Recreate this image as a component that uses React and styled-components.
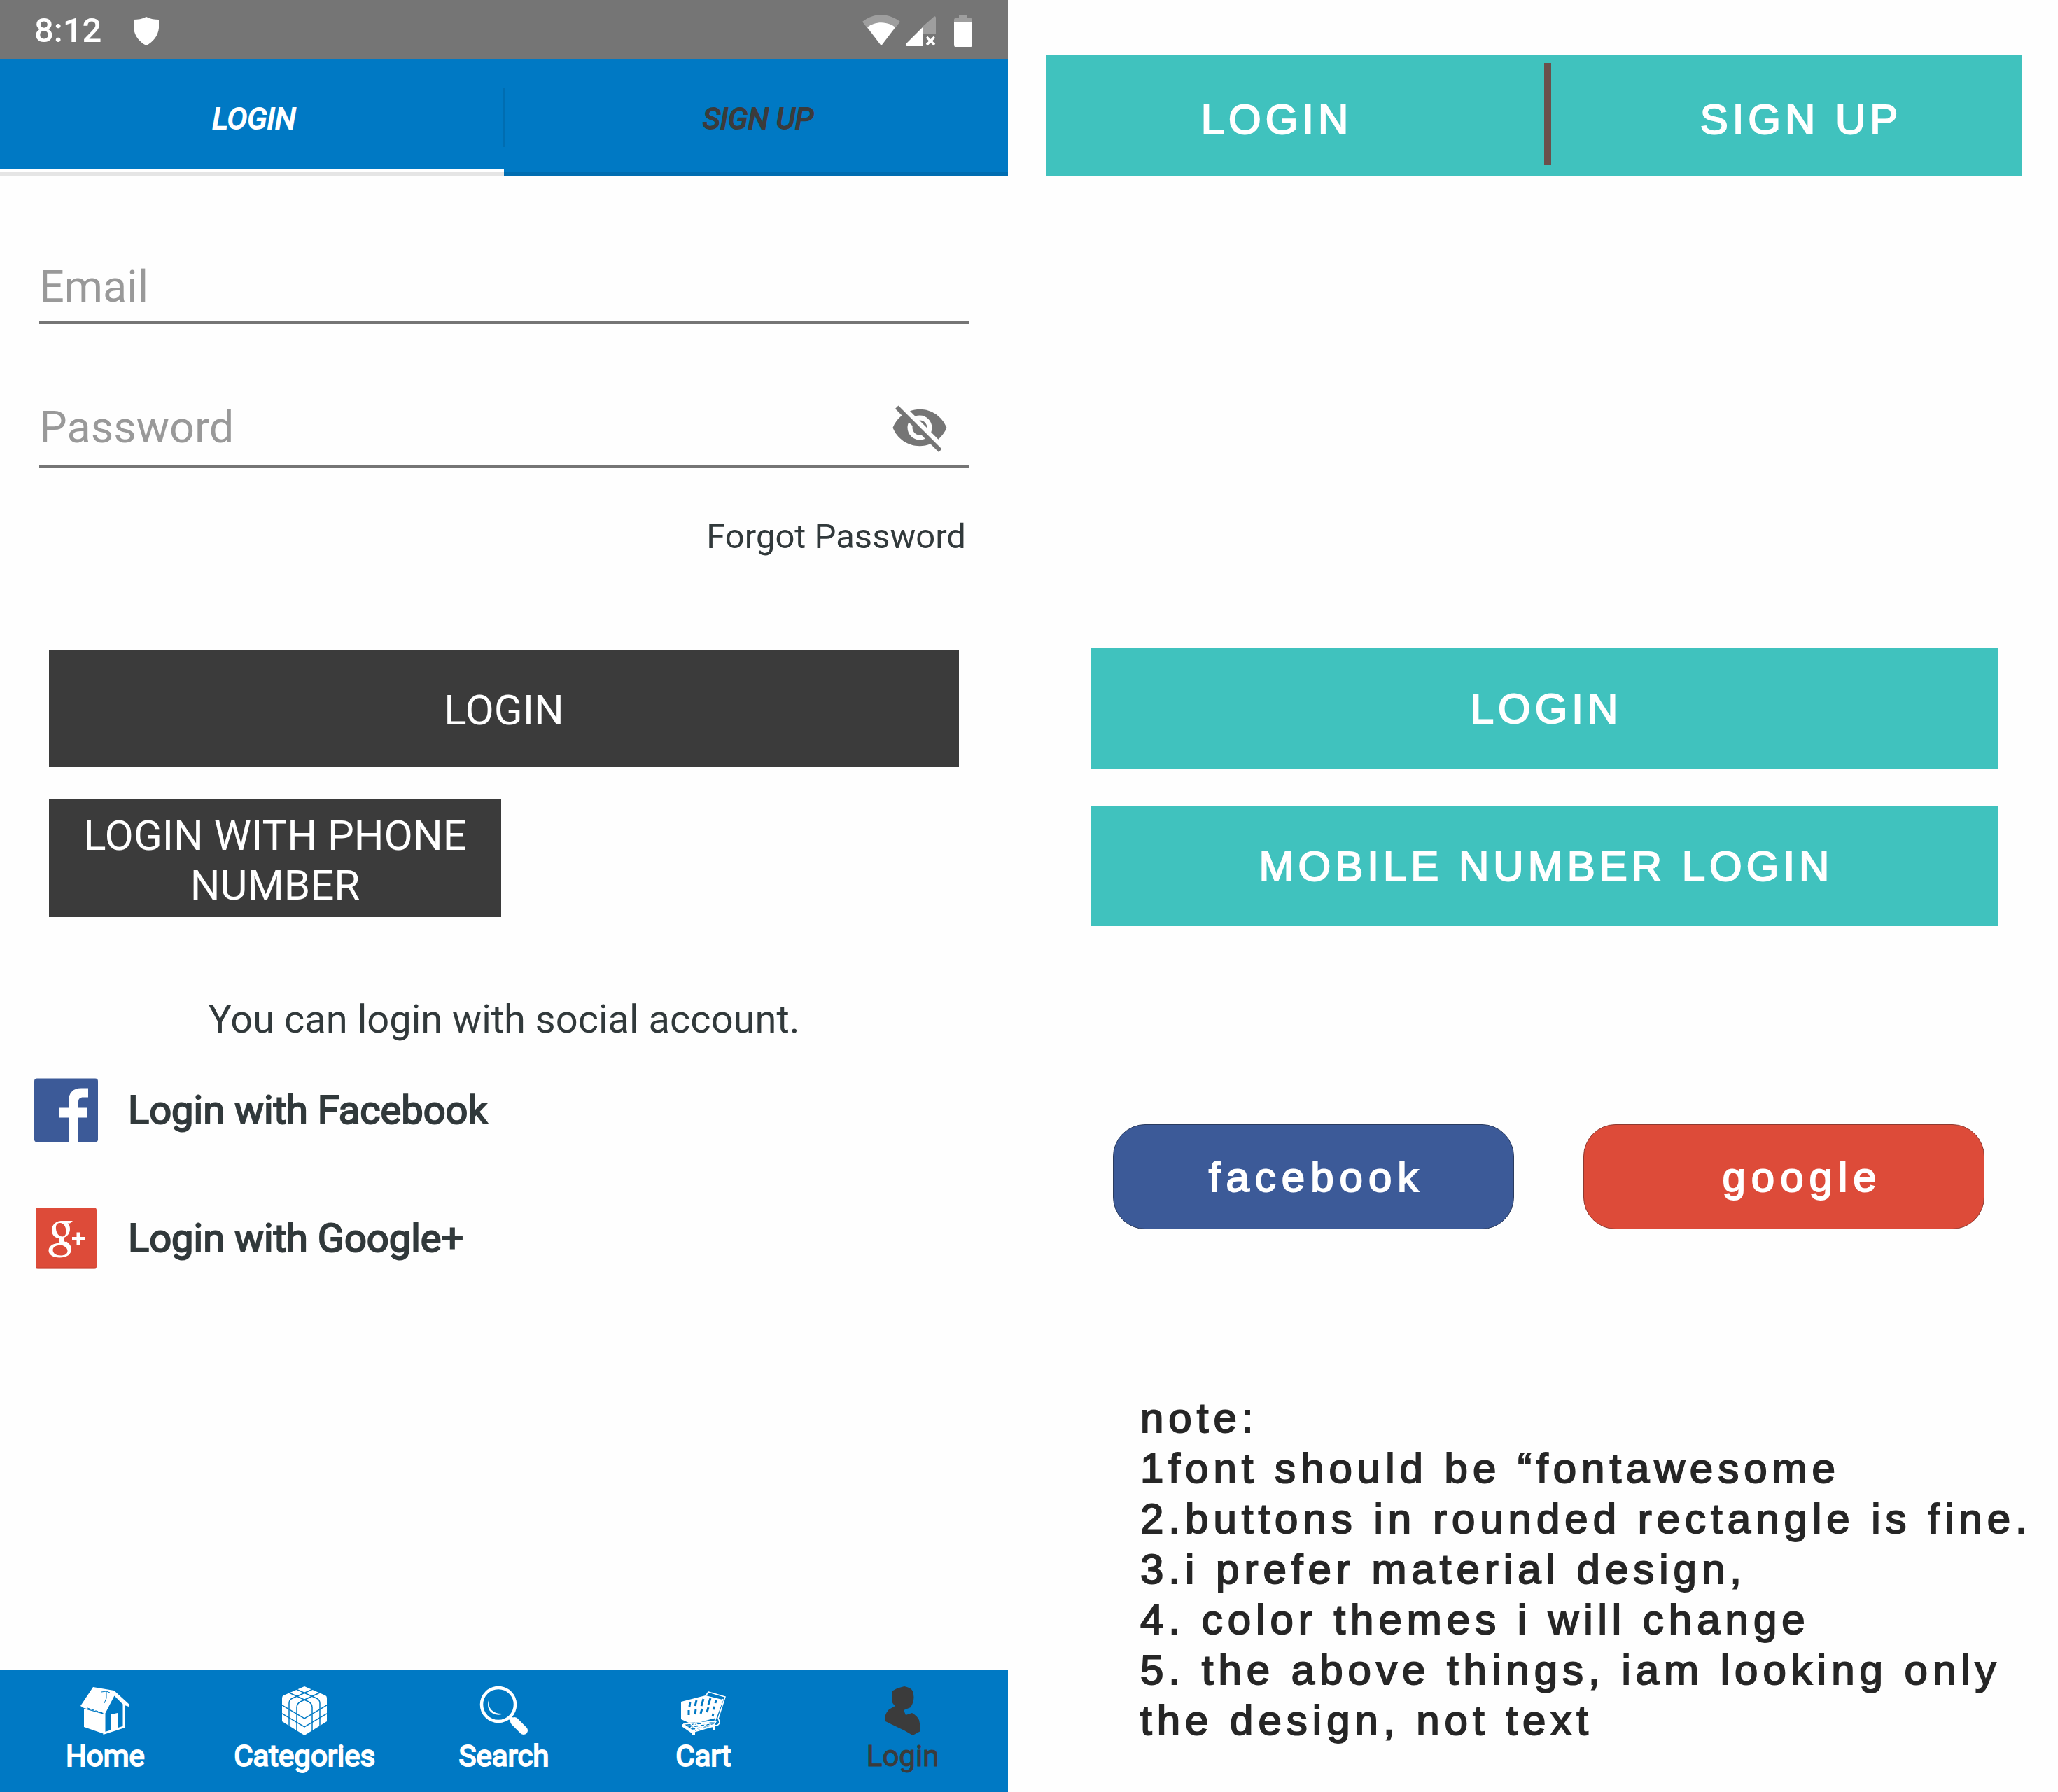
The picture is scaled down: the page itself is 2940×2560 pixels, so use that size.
import React, { useState } from "react";
import styled, { createGlobalStyle, css } from "styled-components";
import { MdVisibility, MdVisibilityOff } from "react-icons/md";

const color = {
  page: "#fefefe",
  status: "#757575",
  blue: "#0079c4",
  blueShade: "#006db1",
  dark: "#3b3b3b",
  ink: "#31393b",
  hint: "#999999",
  line: "#757575",
  teal: "#40c2be",
  brown: "#6b504c",
  facebook: "#3c5a98",
  google: "#dd4b39",
  note: "#262626",
};

const roboto = `Roboto, "Noto Sans", sans-serif`;
const helvetica = `"Liberation Sans", Arial, sans-serif`;

const GlobalStyle = createGlobalStyle`
  *, *::before, *::after { box-sizing: border-box; }
  body { margin: 0; background: ${color.page}; }
  button { border: 0; margin: 0; padding: 0; background: none; cursor: pointer; }
  svg { display: block; flex: none; }
`;

const heavier = (px) => css`
  -webkit-text-stroke: ${px}px currentColor;
`;

const Page = styled.main`
  display: grid;
  grid-template-columns: 24fr 25fr;
  min-height: 100vh;
`;

/* ---------- left: current screen ---------- */

const Phone = styled.section`
  display: flex;
  flex-direction: column;
  font-family: ${roboto};
`;

const StatusBar = styled.header`
  display: flex;
  align-items: center;
  height: 84px;
  padding: 4px 51px 0 49px;
  background: ${color.status};
  color: #fff;
`;

const Clock = styled.span`
  font-size: 49px;
  font-weight: 500;
  line-height: 56px;
  margin-right: 46px;
`;

const StatusIcons = styled.div`
  display: flex;
  align-items: center;
  margin-left: auto;
`;

const StatusGap = styled.span`
  width: ${(p) => p.$size}px;
`;

const Tabs = styled.nav`
  display: flex;
  height: 168px;
  background: ${color.blue};
`;

const Tab = styled.button`
  flex: 1;
  display: flex;
  align-items: center;
  justify-content: center;
  padding: 12px 0 0 6px;
  color: ${(p) => (p.$active ? "#fff" : color.dark)};
  font: italic 400 43px/50px ${roboto};
  border-bottom: 10px solid transparent;
  background: linear-gradient(
      ${(p) => (p.$active ? "#fff" : color.blue)} 3px,
      ${(p) => (p.$active ? "#e5e5e5" : color.blueShade)} 3px
    )
    0 100% / 100% 10px no-repeat border-box;
  ${heavier(2)}
`;

const TabDivider = styled.span`
  width: 2px;
  margin: 42px -1px;
  background: ${color.blueShade};
`;

const Form = styled.form`
  display: flex;
  flex-direction: column;
  padding: 108px 56px 0;
`;

const Field = styled.div`
  display: flex;
  align-items: center;
  height: ${(p) => (p.$tall ? 111 : 103)}px;
  padding-right: 28px;
  margin-bottom: ${(p) => (p.$tall ? 70 : 94)}px;
  border-bottom: 4px solid ${color.line};
`;

const Input = styled.input`
  flex: 1;
  min-width: 0;
  padding: 0;
  border: 0;
  outline: 0;
  background: transparent;
  color: ${color.ink};
  font: 400 63px/76px ${roboto};

  &::placeholder {
    color: ${color.hint};
    opacity: 1;
  }
`;

const EyeButton = styled.button`
  color: ${color.line};
  font-size: 84px;
`;

const ForgotLink = styled.a`
  align-self: flex-end;
  margin-right: 4px;
  color: ${color.ink};
  font-size: 49px;
  line-height: 58px;
  text-decoration: none;
`;

const Actions = styled.div`
  display: flex;
  flex-direction: column;
  gap: 46px;
  padding: 132px 14px 0;
`;

const DarkButton = styled.button`
  width: ${(p) => (p.$half ? "calc(50% - 4px)" : "100%")};
  min-height: 168px;
  padding: 5px 24px 0;
  background: ${color.dark};
  color: #fff;
  font: 400 60px/71px ${roboto};
`;

const SocialHint = styled.p`
  margin: 113px 0 51px;
  text-align: center;
  color: ${color.ink};
  font-size: 56px;
  line-height: 66px;
`;

const SocialLinks = styled.div`
  display: flex;
  flex-direction: column;
  align-items: flex-start;
  gap: 91px;
  padding-left: 49px;
`;

const SocialLink = styled.button`
  display: flex;
  align-items: center;
  gap: 43px;
  color: ${color.ink};
  font: 400 56px/66px ${roboto};
  ${heavier(2)}

  svg {
    width: 91px;
    height: 92px;
  }
`;

const BottomNav = styled.nav`
  display: grid;
  grid-template-columns: repeat(5, 1fr);
  margin-top: auto;
  height: 175px;
  padding: 24px 8px 0;
  background: ${color.blue};
`;

const NavItem = styled.a`
  display: flex;
  flex-direction: column;
  align-items: center;
  gap: 5px;
  color: ${(p) => (p.$active ? color.dark : "#fff")};
  font-size: 42px;
  line-height: 50px;
  text-decoration: none;
  ${(p) => heavier(p.$active ? 1 : 2)}
`;

/* ---------- right: proposed design ---------- */

const Proposal = styled.section`
  display: flex;
  flex-direction: column;
  padding-top: 78px;
  color: #fff;
  font-family: ${helvetica};
`;

const spaced = (tracking) => css`
  font-family: ${helvetica};
  font-size: 60px;
  line-height: 72px;
  letter-spacing: ${tracking}px;
  -webkit-text-stroke: 2px currentColor;
`;

const TealTabs = styled.nav`
  display: grid;
  grid-template-columns: 712fr 10px 672fr;
  height: 174px;
  margin: 0 52px 0 54px;
  background: ${color.teal};
`;

const TealTab = styled.button`
  padding: ${(p) => (p.$last ? "12px 0 0 42px" : "12px 52px 0 0")};
  color: inherit;
  ${spaced(6)}
`;

const TealDivider = styled.span`
  margin: 12px 0 16px;
  background: ${color.brown};
`;

const TealActions = styled.div`
  display: flex;
  flex-direction: column;
  gap: 53px;
  margin: 674px 86px 0 118px;
`;

const TealButton = styled.button`
  height: 172px;
  padding: 1px 0 0 6px;
  background: ${color.teal};
  color: inherit;
  ${spaced(6)}
`;

const PillRow = styled.div`
  display: grid;
  grid-template-columns: repeat(2, 1fr);
  gap: 99px;
  margin: 283px 105px 0 150px;
`;

const Pill = styled.button`
  height: 150px;
  padding: 2px 0 0 ${(p) => (p.$inset ? 52 : 8)}px;
  border: 1px solid ${(p) => (p.$inset ? "#8d3a31" : "#2a3b5e")};
  border-radius: 46px;
  background: ${(p) => (p.$inset ? color.google : color.facebook)};
  color: inherit;
  ${spaced(8)}
`;

const Notes = styled.div`
  margin: 234px 0 0 189px;
  color: ${color.note};
  white-space: nowrap;
  ${spaced(7)}
`;

const NoteLine = styled.p`
  margin: 0;
`;

/* ---------- drawings ---------- */

const ShieldIcon = () => (
  <svg width="36" height="41" viewBox="0 0 36 41" fill="#fff">
    <path d="M18 0C12 3.500 6 4 0 4V16C1 27 8 36 18 41C28 36 35 27 36 16V4C30 4 24 3.500 18 0Z" />
  </svg>
);

const WifiIcon = () => (
  <svg width="56" height="46" viewBox="0 0 56 46">
    <path d="M1 10C17-3 39-3 55 10L29 43Q28 45 27 43Z" fill="#fff" opacity=".3" />
    <path d="M8 18C19 9 37 9 48 18L29 43Q28 45 27 43Z" fill="#fff" />
  </svg>
);

const SignalIcon = () => (
  <svg width="45" height="46" viewBox="0 0 45 46">
    <path d="M25 17L41 3Q44 1 44 5V27H25Z" fill="#fff" opacity=".3" />
    <path d="M25 18V45H3Q-1 45 2 41Z" fill="#fff" />
    <path d="M31 32L42 43M42 32L31 43" stroke="#fff" strokeWidth="3.500" />
  </svg>
);

const BatteryIcon = () => (
  <svg width="26" height="46" viewBox="0 0 26 46">
    <path d="M7 0H19V5H24Q26 5 26 7V12H0V7Q0 5 2 5H7Z" fill="#fff" opacity=".3" />
    <path d="M0 11H26V43Q26 46 24 46H2Q0 46 0 43Z" fill="#fff" />
  </svg>
);

const FacebookLogo = () => (
  <svg viewBox="0 0 91 91">
    <rect width="91" height="91" rx="4" fill={color.facebook} />
    <path
      d="M49 91V56H36V42H49V33C49 20 56 14 67 14H77V27H70C65 27 63 29 63 34V42H76L75 56H63V91Z"
      fill="#fff"
    />
  </svg>
);

const GoogleLogo = () => (
  <svg viewBox="0 0 91 91">
    <rect x="2" y="2" width="87" height="87" rx="3" fill={color.google} />
    <path d="M3 88H88" stroke="#b03a2e" strokeWidth="1.500" />
    {/* Two-storey g: ring shapes cut with even-odd, plus the connecting strokes */}
    <g fill="#fff" fillRule="evenodd" transform="translate(2 1)">
      <path d="M36 19.500C28 20 23 26 23 33C23 40 28 44.500 35 44.500C43 44.500 49 39 49 31C49 24 45 20 36 19.500ZM34 22.500C39 21.500 43 27 43.500 33C44 38 42 42 38 42C33 42 29.500 37 29 31C28.700 26 30 23 34 22.500Z" />
      <path d="M36 51C26 51 18.500 55 18.500 62C18.500 68 25 72 34 72C45 72 51 67 51 60C51 55 48 52 44 49L38 51ZM37 54C42 56 45.500 58.500 45.500 62.500C45.500 67 41 69 36 69C29 69 24.500 66 24.500 61C24.500 56.500 30 54 37 54Z" />
      <path d="M35 19.500H53L49 23H42Z" />
      <path d="M36 42C32 46 32 49 37 53L47 54C43 50 38 48 41 43Z" />
    </g>
    <path d="M54 46H72M63 37V55" stroke="#fff" strokeWidth="5" />
  </svg>
);

const HomeIcon = () => (
  <svg width="70" height="70" viewBox="0 0 70 70">
    <path d="M18 1L48 6L70 26L69 29L63 27L48 13L33 38L5 31L0 28Z" fill="#fff" />
    <path d="M5 32L34 40V68L5 58Z" fill="#fff" />
    <path d="M34 38L48 11L62 25V58L34 67Z" fill={color.blue} stroke="#fff" strokeWidth="3" />
    <path d="M44 40L53 38V60L44 64Z" fill="#fff" />
    <path d="M30 8L37 7V17L34 24M37 7L42 9" fill="none" stroke={color.blue} strokeWidth="1" />
    <path d="M10 31L32 38" stroke={color.blue} strokeDasharray="4 2" strokeWidth="1" />
  </svg>
);

const CategoriesIcon = () => (
  <svg width="64" height="70" viewBox="0 0 64 70">
    <path d="M32 0L62 13Q64 14 64 17V50L32 70L0 50V17Q0 14 2 13Z" fill="#fff" />
    <g fill="none" stroke={color.blue} strokeWidth="1.500">
      <path d="M20 4L49 17Q54 19 54 24V60M10 9L38 22Q43 25 43 30V66" />
      <path d="M44 4L15 17Q10 19 10 24V60M54 9L26 22Q21 25 21 30V66" />
      <path d="M0 27L32 46L64 27M0 39L32 58L64 39" />
    </g>
  </svg>
);

const SearchIcon = () => (
  <svg width="70" height="70" viewBox="0 0 70 70">
    <circle cx="27" cy="26" r="24" fill="none" stroke="#fff" strokeWidth="4.500" />
    <path d="M13 20C12 32 20 40 34 39C25 44 8 38 13 20Z" fill="#fff" />
    <path d="M42 43L50 51" stroke="#fff" strokeWidth="6" />
    <path d="M50 50L63 63" stroke="#fff" strokeLinecap="round" strokeWidth="12" />
  </svg>
);

const CartIcon = () => (
  <svg width="64" height="70" viewBox="0 -8 64 70">
    <path d="M0 14L35 5L59 11L50 37L28 43L11 44L0 39Z" fill="#fff" />
    <g stroke={color.blue} fill="none" strokeWidth="3">
      <path d="M13 14L12 21M22 12L20 20M32 10L29 20M42 9L39 18M50 12L49 16" />
      <path d="M11 26V33M21 25L20 32M30 24L28 31M39 22L37 29M48 21L46 25M46 31L45 35" />
    </g>
    <g stroke="#fff" fill="none" strokeWidth="1.600">
      <path d="M35 6L39 0L63 7L53 38Q58 46 50 48L45 46" />
      <path d="M60 10L48 42M3 46L50 42L46 49L18 57L3 46" />
      <path d="M6 49L49 44M11 52L47 47M14 55L46 49M12 44L24 55M20 44L31 53M29 43L38 51M37 42L44 49M22 43L12 53M32 43L18 56M42 41L27 54" />
    </g>
    <path d="M3 48L16 57" stroke="#fff" strokeLinecap="round" strokeWidth="4" />
    <path d="M18 54V61M47 47V55" stroke="#fff" strokeWidth="4" />
  </svg>
);

const PersonIcon = () => (
  <svg width="50" height="70" viewBox="0 0 50 70">
    <path
      d="M27 0Q37 2 39 7Q43 19 36 30L26 34L29 41L38 38Q45 42 48 48Q50 55 50 64L39 70L27 63L0 50V41Q2 36 5 33L14 28Q9 24 9 19V8Q13 3 27 0Z"
      fill={color.dark}
    />
  </svg>
);

const navItems = [
  { label: "Home", Icon: HomeIcon },
  { label: "Categories", Icon: CategoriesIcon },
  { label: "Search", Icon: SearchIcon },
  { label: "Cart", Icon: CartIcon },
  { label: "Login", Icon: PersonIcon, active: true },
];

const notes = [
  "note:",
  "1font should be “fontawesome",
  "2.buttons in rounded rectangle is fine.",
  "3.i prefer material design,",
  "4. color themes i will change",
  "5. the above things, iam looking only",
  "the design, not text",
];

function LoginScreen() {
  const [visible, setVisible] = useState(false);

  return (
    <Phone>
      <StatusBar>
        <Clock>8:12</Clock>
        <ShieldIcon />
        <StatusIcons>
          <WifiIcon />
          <StatusGap $size={6} />
          <SignalIcon />
          <StatusGap $size={25} />
          <BatteryIcon />
        </StatusIcons>
      </StatusBar>

      <Tabs>
        <Tab type="button" $active>LOGIN</Tab>
        <TabDivider />
        <Tab type="button">SIGN UP</Tab>
      </Tabs>

      <Form onSubmit={(e) => e.preventDefault()}>
        <Field>
          <Input type="email" aria-label="Email" placeholder="Email" />
        </Field>
        <Field $tall>
          <Input type={visible ? "text" : "password"} aria-label="Password" placeholder="Password" />
          <EyeButton type="button" aria-label="Show password" onClick={() => setVisible(!visible)}>
            {visible ? <MdVisibility /> : <MdVisibilityOff />}
          </EyeButton>
        </Field>
        <ForgotLink href="#forgot">Forgot Password</ForgotLink>
        <Actions>
          <DarkButton type="submit">LOGIN</DarkButton>
          <DarkButton type="button" $half>LOGIN WITH PHONE NUMBER</DarkButton>
        </Actions>
      </Form>

      <SocialHint>You can login with social account.</SocialHint>
      <SocialLinks>
        <SocialLink type="button">
          <FacebookLogo />
          Login with Facebook
        </SocialLink>
        <SocialLink type="button">
          <GoogleLogo />
          Login with Google+
        </SocialLink>
      </SocialLinks>

      <BottomNav>
        {navItems.map(({ label, Icon, active }) => (
          <NavItem key={label} href={`#${label.toLowerCase()}`} $active={active}>
            <Icon />
            {label}
          </NavItem>
        ))}
      </BottomNav>
    </Phone>
  );
}

function ProposedDesign() {
  return (
    <Proposal>
      <TealTabs>
        <TealTab type="button">LOGIN</TealTab>
        <TealDivider />
        <TealTab type="button" $last>SIGN UP</TealTab>
      </TealTabs>

      <TealActions>
        <TealButton type="button">LOGIN</TealButton>
        <TealButton type="button">MOBILE NUMBER LOGIN</TealButton>
      </TealActions>

      <PillRow>
        <Pill type="button">facebook</Pill>
        <Pill type="button" $inset>google</Pill>
      </PillRow>

      <Notes>
        {notes.map((line) => (
          <NoteLine key={line}>{line}</NoteLine>
        ))}
      </Notes>
    </Proposal>
  );
}

export default function App() {
  return (
    <>
      <GlobalStyle />
      <Page>
        <LoginScreen />
        <ProposedDesign />
      </Page>
    </>
  );
}
